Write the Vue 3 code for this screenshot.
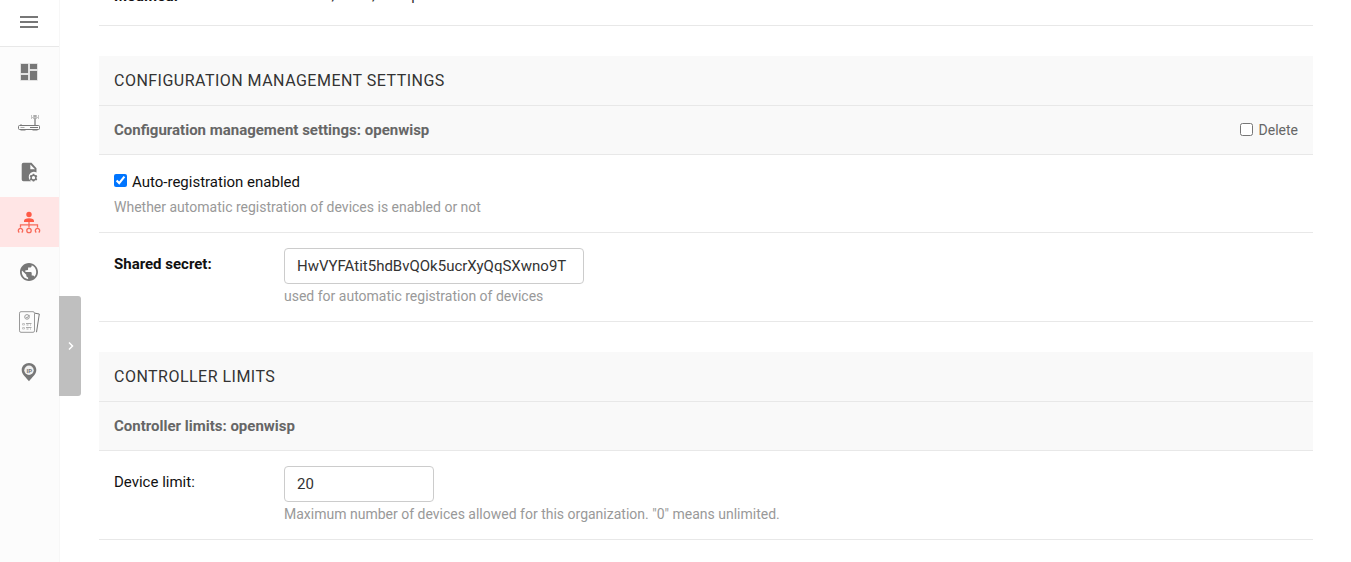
<script setup>
import { ref } from 'vue'

const autoRegistration = ref(true)
const markedForDeletion = ref(false)
const sharedSecret = ref('HwVYFAtit5hdBvQOk5ucrXyQqSXwno9T')
const deviceLimit = ref('20')
</script>

<template>
  <div class="layout">
    <aside class="sidebar">
      <button class="menu-btn" aria-label="Menu">
        <span></span><span></span><span></span>
      </button>
      <nav class="nav">
        <a class="item">
          <svg width="24" height="24" viewBox="0 0 24 24">
            <g fill="none" stroke="#e2e2e2" stroke-width="1">
              <path d="M3.500 3.500h8v10h-8zM3.500 14.500h8v6h-8zM12.500 3.500h8v6h-8zM12.500 10.500h8v10h-8z" />
            </g>
            <path fill="#777" d="M4 4h7v9H4zM4 15h7v5H4zM13 4h7v5h-7zM13 11h7v9h-7z" />
          </svg>
        </a>
        <a class="item">
          <svg width="24" height="24" viewBox="0 0 24 24">
            <g fill="none" stroke="#777">
              <rect x="1.500" y="15.500" width="21" height="4" rx="1" />
              <path d="M3.500 17.500h4" stroke="#aaa" />
              <path d="M13 17.500h8" />
              <path d="M18 5v10" stroke="#aaa" stroke-width="2" />
              <path d="M14.500 5v4M16.500 5v4M19.500 5v4M21.500 5v4M15 7.500h6M3 14.500h2" stroke="#c4c4c4" />
              <path d="M3.500 20.500h5M15.500 20.500h5" stroke="#bbb" />
            </g>
          </svg>
        </a>
        <a class="item">
          <svg width="24" height="24" viewBox="0 0 24 24">
            <path fill="#777" d="M6.500 2.800h8l5 5.500v4.300a5 5 0 0 0-5.300 8.700H6.500a1.800 1.800 0 0 1-1.800-1.800V4.600a1.800 1.800 0 0 1 1.800-1.800z" />
            <path fill="#fcfcfc" d="M13.300 4.500v4.800h4.700z" />
            <circle cx="16.500" cy="17.700" r="2.400" fill="#fcfcfc" stroke="#777" stroke-width="1.500" />
            <path fill="none" stroke="#777" stroke-width="1.600" d="M16.500 13.800v1.500M16.500 20v1.500M13.100 15.700l1.400.8M18.500 18.900l1.400.8M13.100 19.700l1.400-.8M18.500 16.500l1.400-.8" />
          </svg>
        </a>
        <a class="item active">
          <svg width="24" height="24" viewBox="0 0 24 24">
            <g fill="#ff5a46">
              <circle cx="12" cy="4.500" r="2.700" />
              <path d="M7 12v-1.200C7 9.200 8.800 8.300 12 8.300s5 .9 5 2.500V12z" />
            </g>
            <g fill="none" stroke="#f86a5a" stroke-width="1.300">
              <path d="M12 12v5.500M3.500 17.500v-2.700h17v2.700" />
              <circle cx="12" cy="20.500" r="2.200" />
              <path d="M2.300 22.500a2.200 2.200 0 1 1 2.400 0M19.300 22.500a2.200 2.200 0 1 1 2.400 0" />
            </g>
          </svg>
        </a>
        <a class="item">
          <svg width="24" height="24" viewBox="0 0 24 24">
            <g transform="translate(1.200 1.200) scale(.9)">
              <path fill="#777" d="M12 2C6.480 2 2 6.480 2 12s4.480 10 10 10 10-4.480 10-10S17.520 2 12 2zm-1 17.930c-3.950-.49-7-3.850-7-7.930 0-.62.080-1.210.210-1.790L9 15v1c0 1.100.9 2 2 2v1.930zm6.900-2.540c-.26-.81-1-1.390-1.900-1.390h-1v-3c0-.55-.45-1-1-1H8v-2h2c.55 0 1-.45 1-1V7h2c1.100 0 2-.9 2-2v-.41c2.930 1.190 5 4.060 5 7.410 0 2.080-.8 3.970-2.100 5.390z" />
            </g>
          </svg>
        </a>
        <a class="item">
          <svg width="24" height="24" viewBox="0 0 24 24">
            <g fill="none" stroke="#999">
              <rect x="2.500" y="1.700" width="15" height="20.600" rx="1.500" />
              <path d="M18 3.200l4.300.8-2.800 18.200" stroke="#777" />
              <circle cx="10" cy="6.900" r="2.300" />
              <path d="M9 6.900l1 1 2.500-3" />
              <path stroke="#c4c4c4" d="M5.500 13.500h2v1.500h-2zM5.500 17.500h2v1.500h-2z" />
              <path stroke="#aaa" d="M9 13.500h5.500M9.500 15h2M13 15h1M9 17.500h5.500M9.500 19h2M13 19h1" />
            </g>
          </svg>
        </a>
        <a class="item">
          <svg width="24" height="24" viewBox="0 0 24 24">
            <path fill="#777" d="M12 2.900c-4 0-7.300 3-7.300 7.100 0 4.600 4.800 7.800 7.300 11.200 2.500-3.400 7.300-6.600 7.300-11.200 0-4.100-3.300-7.100-7.300-7.100z" />
            <circle cx="12" cy="10.200" r="4.700" fill="#f0f0f0" />
            <text class="ip" x="12.200" y="12.500" text-anchor="middle">IP</text>
          </svg>
        </a>
      </nav>
      <button class="toggle" aria-label="Expand">
        <svg width="22" height="20" viewBox="0 0 22 20">
          <path d="M10 6.500l3.500 3.500-3.500 3.500" fill="none" stroke="#fff" stroke-width="1.500" />
        </svg>
      </button>
    </aside>

    <main class="content">
      <div class="modified">
        <label>Modified:</label>
        <span>Oct. 11, 2021, 4:31 p.m.</span>
      </div>

      <section class="module">
        <h2>CONFIGURATION MANAGEMENT SETTINGS</h2>
        <h3>
          <span>Configuration management settings: openwisp</span>
          <label class="delete"><input v-model="markedForDeletion" type="checkbox">Delete</label>
        </h3>
        <div class="row check-row">
          <label class="check"><input v-model="autoRegistration" type="checkbox">Auto-registration enabled</label>
          <p class="help">Whether automatic registration of devices is enabled or not</p>
        </div>
        <div class="row field-row">
          <label class="name required">Shared secret:</label>
          <div>
            <input v-model="sharedSecret" class="field wide" type="text">
            <p class="help">used for automatic registration of devices</p>
          </div>
        </div>
      </section>

      <section class="module">
        <h2>CONTROLLER LIMITS</h2>
        <h3><span>Controller limits: openwisp</span></h3>
        <div class="row field-row">
          <label class="name">Device limit:</label>
          <div>
            <input v-model="deviceLimit" class="field" type="text">
            <p class="help">Maximum number of devices allowed for this organization. "0" means unlimited.</p>
          </div>
        </div>
      </section>
    </main>
  </div>
</template>

<style>
body {
  background: #fff;
  overflow: hidden;
}
</style>

<style scoped>
.layout {
  display: flex;
  height: 562px;
  overflow: hidden;
  font-family: Roboto, "Liberation Sans", sans-serif;
  font-size: 15px;
  color: #111;
}
.layout *,
.layout {
  box-sizing: border-box;
}
.sidebar {
  position: relative;
  flex: none;
  width: 60px;
  height: 562px;
  background: #fcfcfc;
  border-right: 1px solid #f7f7f7;
}
.menu-btn {
  display: flex;
  flex-direction: column;
  align-items: center;
  gap: 3px;
  width: 59px;
  height: 47px;
  padding: 16px 0 0;
  border: 0;
  border-bottom: 1px solid #e8e8e8;
  background: #fff;
}
.menu-btn span {
  width: 18px;
  height: 2px;
  margin-right: 1px;
  background: #777;
}
.item {
  display: flex;
  align-items: center;
  height: 50px;
  padding-left: 17px;
}
.item.active {
  background: #ffe5e5;
}
.ip {
  font: bold 6px Roboto, sans-serif;
  fill: #777;
}
.toggle {
  position: absolute;
  left: 59px;
  top: 296px;
  display: flex;
  align-items: center;
  width: 22px;
  height: 100px;
  padding: 0;
  border: 0;
  border-radius: 0 3px 3px 0;
  background: #bfbfbf;
}
.content {
  flex: none;
  width: 1214px;
  margin-left: 39px;
}
.modified {
  display: flex;
  height: 26px;
  padding-left: 15px;
  border-bottom: 1px solid #e8e8e8;
  line-height: 20px;
}
.modified label {
  width: 170px;
  margin-top: -14px;
  font-weight: 700;
}
.modified span {
  margin-top: -15px;
  color: #333;
}
.module {
  margin-top: 30px;
}
h2 {
  height: 50px;
  margin: 0;
  padding-left: 15px;
  border-bottom: 1px solid #e8e8e8;
  background: #f9f9f9;
  font-size: 16px;
  font-weight: 400;
  line-height: 49px;
  letter-spacing: 0.48px;
  color: #333;
}
h3 {
  display: flex;
  justify-content: space-between;
  height: 49px;
  margin: 0;
  padding: 0 15px;
  border-bottom: 1px solid #e8e8e8;
  background: #f9f9f9;
  font-size: 15px;
  font-weight: 700;
  line-height: 48px;
  color: #666;
}
.delete {
  display: flex;
  align-items: center;
  font-size: 14px;
  font-weight: 400;
}
.delete input {
  width: 13px;
  height: 13px;
  margin: 0 6px 2px 0;
}
.row {
  padding: 15px;
  border-bottom: 1px solid #e8e8e8;
}
.check-row {
  height: 78px;
}
.check {
  display: flex;
  height: 24px;
  line-height: 24px;
}
.check input {
  width: 13px;
  height: 13px;
  margin: 4px 5px 0 0;
}
.help {
  margin: 4px 0 0;
  font-size: 14px;
  line-height: 18px;
  color: #999;
}
.field-row {
  display: flex;
  height: 89px;
}
.field-row .help {
  margin-top: 3px;
}
.name {
  width: 170px;
  line-height: 32px;
}
.required {
  font-weight: 700;
}
.field {
  display: block;
  width: 150px;
  height: 36px;
  padding: 0 12px;
  border: 1px solid #ccc;
  border-radius: 4px;
  background: #fff;
  font: 15px Roboto, "Liberation Sans", sans-serif;
  color: #333;
}
.wide {
  width: 300px;
}
</style>
